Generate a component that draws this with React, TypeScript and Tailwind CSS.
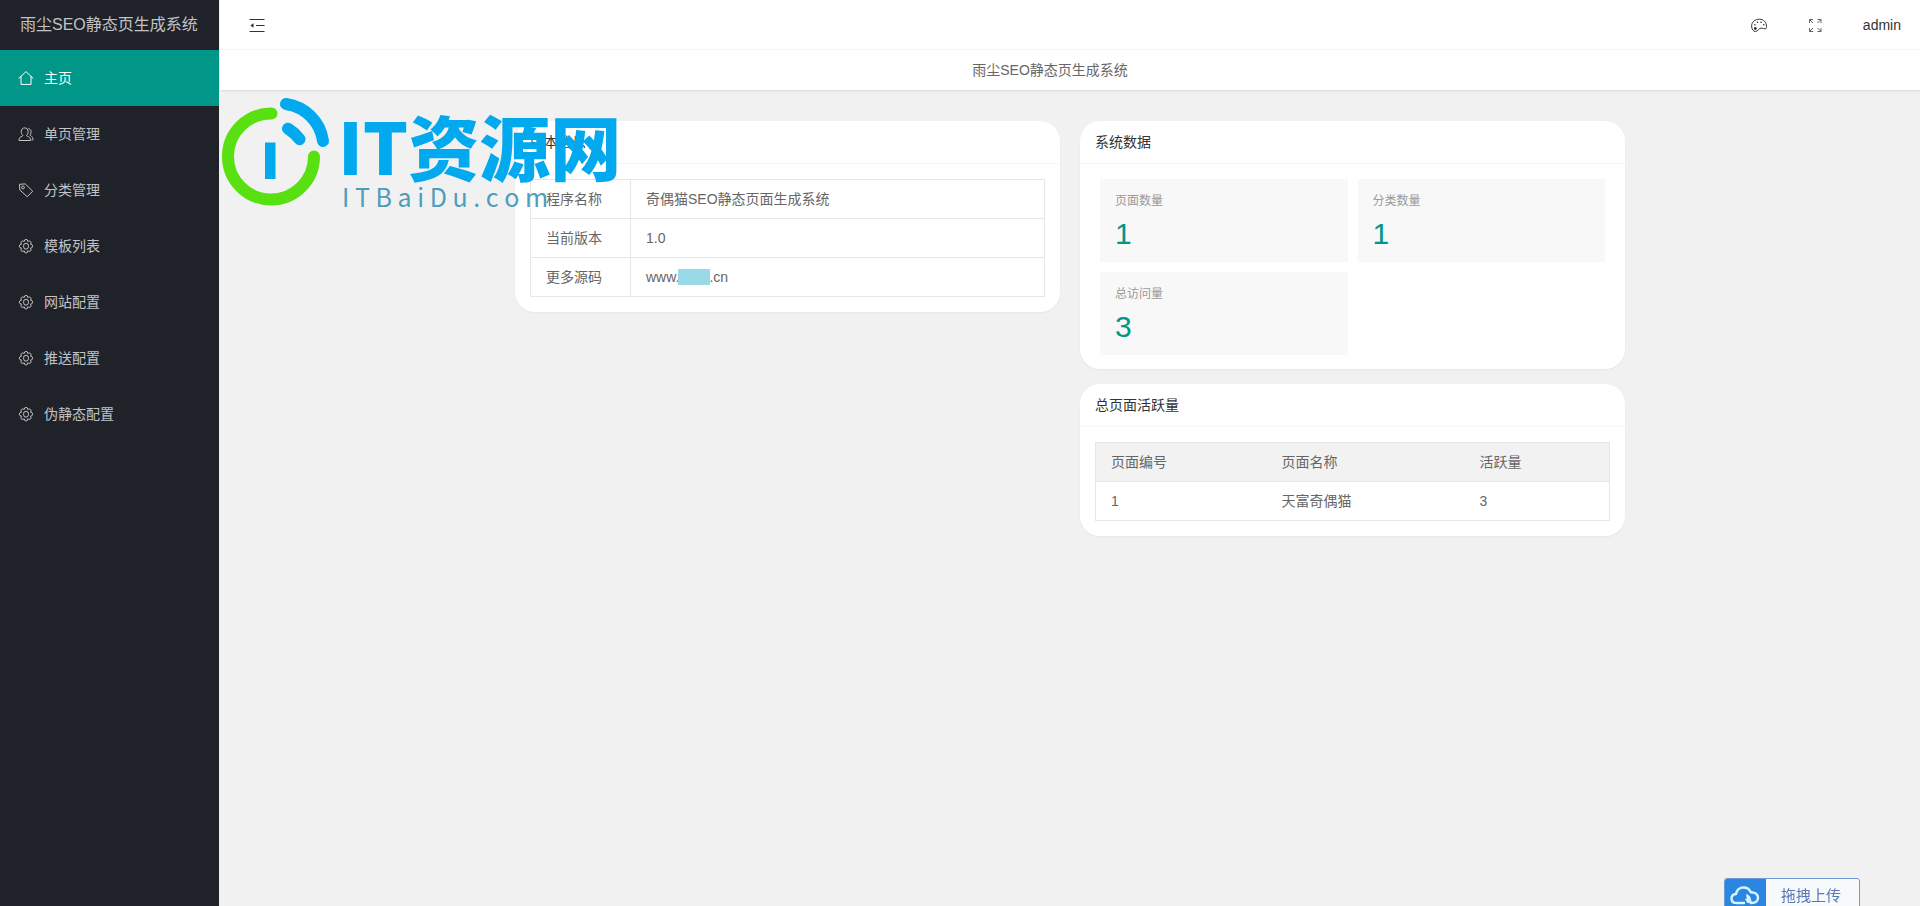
import { ReactNode } from 'react';

const menuItems = [
  { label: '主页', icon: <HomeIcon />, active: true },
  { label: '单页管理', icon: <UserIcon /> },
  { label: '分类管理', icon: <TagIcon /> },
  { label: '模板列表', icon: <GearIcon /> },
  { label: '网站配置', icon: <GearIcon /> },
  { label: '推送配置', icon: <GearIcon /> },
  { label: '伪静态配置', icon: <GearIcon /> },
];

const stats = [
  { label: '页面数量', value: 1 },
  { label: '分类数量', value: 1 },
  { label: '总访问量', value: 3 },
];

const pages = [{ id: 1, name: '天富奇偶猫', views: 3 }];

function HomeIcon() {
  return (
    <svg className="size-4" viewBox="0 0 16 16" fill="none" stroke="currentColor" strokeWidth="1">
      <path d="M1 8.2 8 1.600l7 6.600M3 6.600v7.800h10V6.600" strokeLinejoin="round" strokeLinecap="round" />
    </svg>
  );
}

function UserIcon() {
  return (
    <svg className="size-4" viewBox="0 0 16 16" fill="none" stroke="currentColor" strokeWidth="1" strokeLinejoin="round">
      <path d="M4.900 9.300C3.600 8.200 3.200 6.900 3.300 5.400 3.400 3.300 4.700 1.900 6.700 1.900s3.300 1.400 3.400 3.500c.1 1.500-.3 2.800-1.600 3.900.2.800 1 1.100 2 1.500 1.400.6 2 1.600 2 3.700H1c0-2.100.6-3.100 2-3.700 1-.4 1.700-.7 1.900-1.500Z" />
      <path d="M10.300 2.700c1.700 0 2.800 1.300 2.800 3.100 0 1.300-.4 2.300-1.200 3.200.2.800 3 .8 3.100 4.900h-1.500" />
    </svg>
  );
}

function TagIcon() {
  return (
    <svg className="size-4" viewBox="0 0 16 16" fill="none" stroke="currentColor" strokeWidth="1" strokeLinejoin="round">
      <path d="M1.500 2.300 7.200 1.900 14.700 9.200 9.200 14.700 1.800 8Z" />
      <circle cx="5" cy="5.500" r="1.400" />
    </svg>
  );
}

function GearIcon() {
  return (
    <svg className="size-4" viewBox="0 0 16 16" fill="none" stroke="currentColor" strokeWidth="1" strokeLinejoin="round">
      <path d="M6.200 3.400Q6.300 1.400 8 1.400T9.800 3.400Q11.500 2.300 12.600 3.500T12.500 6.100Q14.700 6.400 14.700 8.200T12.500 10.100Q13.700 11.900 12.500 13T9.800 12.800Q9.700 15 8 15T6.200 12.800Q4.500 14.100 3.400 13T3.500 10.100Q1.300 10 1.300 8.200T3.500 6.100Q2.300 4.600 3.400 3.500T6.200 3.400Z" />
      <ellipse cx="8" cy="8.200" rx="2.500" ry="3" />
    </svg>
  );
}

function FoldIcon() {
  return (
    <svg className="size-4" viewBox="0 0 16 16" fill="none" stroke="currentColor" strokeWidth="1.200">
      <path d="M.500 2.500h15M7 8.500h8.500M.500 14.500h15" />
      <path d="M4.500 6.200v4.600L1.300 8.500Z" fill="currentColor" stroke="none" />
    </svg>
  );
}

function PaletteIcon() {
  return (
    <svg className="size-4" viewBox="0 0 16 16" fill="none" stroke="currentColor" strokeWidth="1">
      <path d="M8.300 2.200C3.900 2.200.6 5.200.6 9.100c0 3.100 1.700 5.400 3.900 5.400 2.700 0 2.700-3.500 6-3.400 1.500 0 2.300.9 4 .8.700-.100 1-1.100 1-2.400 0-4.200-3-7.300-7.200-7.300Z" />
      <g fill="currentColor" stroke="none">
        <circle cx="4.300" cy="11.500" r="1.400" />
        <circle cx="3.900" cy="7.800" r=".8" />
        <circle cx="6.500" cy="5.200" r=".8" />
        <circle cx="10" cy="5.200" r=".8" />
        <circle cx="12.700" cy="7.800" r=".8" />
      </g>
    </svg>
  );
}

function FullscreenIcon() {
  return (
    <svg className="size-4" viewBox="0 0 16 16" fill="none" stroke="currentColor" strokeWidth="1">
      <path d="M2.500 6V2.500H6M2.500 2.500l3.500 3.500M10.500 2.500H14V6M14 2.500 10.500 6M2.500 11v3.500H6M2.500 14.500 6 11M10.500 14.500H14V11M14 14.500 10.500 11" />
    </svg>
  );
}

function CloudIcon() {
  return (
    <svg className="h-6 w-8" viewBox="0 0 32 24" fill="none" stroke="currentColor" strokeWidth="2.500" strokeLinecap="round" strokeLinejoin="round">
      <path d="M15 19H8c-3.500 0-5.500-2-5.500-4.600s2-4.200 4.600-4.500C7.700 6 10.700 3.500 14.500 3.500c3.500 0 6.200 2 7.300 4.800 4.300 0 7.200 2.300 7.200 5.500 0 3-2.500 5.200-6 5.200h-1" />
      <path d="M18 10.500c2.500 1 3.500 3 3.500 5.500l1.500 3-4.500-.5-2-3.500 1.500.5Z" fill="currentColor" strokeWidth="1" />
    </svg>
  );
}

function Watermark() {
  return (
    <div className="pointer-events-none absolute top-24 left-[222px] z-10 flex select-none">
      <svg className="h-28 w-[108px]" viewBox="0 0 108 112" fill="none" strokeWidth="12" strokeLinecap="round">
        <path d="M49.500 17.500a43 43 0 1 0 42.500 43" stroke="#58e010" />
        <path d="M64 8a43.400 43.400 0 0 1 37 37" stroke="#03a9ee" />
        <path d="M66 32.700q6.500 4 11.500 10.500" stroke="#03a9ee" />
        <path d="M43 46.500h10.500V83H43Z" fill="#03a9ee" stroke="none" />
      </svg>
      <div className="ml-2 pt-2">
        <div className="font-['Noto_Sans_CJK_SC',sans-serif] text-[71px] leading-[80px] font-black whitespace-nowrap text-[#03a9ee]">
          IT资源网
        </div>
        <div className="pl-1 font-['Noto_Sans_CJK_SC',sans-serif] text-[25px] leading-6 whitespace-nowrap text-[#4d9dbd]">
          I T B a i D u . c o m
        </div>
      </div>
    </div>
  );
}

function Card({ title, children }: { title: string; children: ReactNode }) {
  return (
    <section className="rounded-[20px] bg-white shadow-[0_1px_2px_0_rgba(0,0,0,0.05)]">
      <h2 className="border-b border-[#f6f6f6] px-[15px] leading-[42px] text-[#333]">{title}</h2>
      {children}
    </section>
  );
}

export default function App() {
  return (
    <div className="relative flex min-h-screen overflow-hidden bg-[#f1f1f1] font-['Liberation_Sans','Noto_Sans_CJK_SC',sans-serif] text-sm text-[#666]">
      <aside className="w-[219px] shrink-0 bg-[#20222a] text-[#c2c3c5]">
        <h1 className="px-5 text-base leading-[50px] whitespace-nowrap">雨尘SEO静态页生成系统</h1>
        <nav>
          {menuItems.map((item) => (
            <a
              key={item.label}
              href="#"
              className={`flex h-14 items-center gap-[10px] pl-[18px] ${item.active ? 'bg-[#009688] text-white' : ''}`}
            >
              {item.icon}
              {item.label}
            </a>
          ))}
        </nav>
      </aside>

      <div className="min-w-0 flex-1 border-l border-[#eceff4]">
        <header className="flex h-[50px] items-center justify-between border-b border-[#f6f6f6] bg-white pr-[19px] pl-[29px] text-[#333]">
          <button type="button" aria-label="折叠菜单">
            <FoldIcon />
          </button>
          <div className="flex items-center gap-10">
            <button type="button" aria-label="主题">
              <PaletteIcon />
            </button>
            <button type="button" aria-label="全屏" className="text-[#666]">
              <FullscreenIcon />
            </button>
            <a href="#">admin</a>
          </div>
        </header>
        <div className="bg-white pr-10 text-center leading-10 shadow-[0_1px_2px_0_rgba(0,0,0,0.1)]">
          雨尘SEO静态页生成系统
        </div>

        <main className="mx-auto grid max-w-[1110px] grid-cols-2 items-start gap-5 pt-[31px]">
          <Card title="版本信息">
            <div className="p-[15px]">
              <table className="w-full border-collapse text-left">
                <tbody>
                  <tr>
                    <th className="w-[100px] border border-[#e6e6e6] px-[15px] py-[9px] font-normal">程序名称</th>
                    <td className="border border-[#e6e6e6] px-[15px] py-[9px]">奇偶猫SEO静态页面生成系统</td>
                  </tr>
                  <tr>
                    <th className="border border-[#e6e6e6] px-[15px] py-[9px] font-normal">当前版本</th>
                    <td className="border border-[#e6e6e6] px-[15px] py-[9px]">1.0</td>
                  </tr>
                  <tr>
                    <th className="border border-[#e6e6e6] px-[15px] py-[9px] font-normal">更多源码</th>
                    <td className="border border-[#e6e6e6] px-[15px] py-[9px]">
                      <div className="flex items-center">
                        www.
                        <span className="-mx-px h-4 w-8 bg-[#9ad9e8]" />
                        .cn
                      </div>
                    </td>
                  </tr>
                </tbody>
              </table>
            </div>
          </Card>

          <div className="flex flex-col gap-[15px]">
            <Card title="系统数据">
              <ul className="grid grid-cols-2 gap-[10px] px-5 pt-[15px] pb-[14px]">
                {stats.map((stat) => (
                  <li key={stat.label} className="bg-[#f8f8f8] px-[15px] pt-[14px] pb-[10px]">
                    <h3 className="text-xs text-[#999]">{stat.label}</h3>
                    <p className="mt-[7px] text-3xl text-[#009688]">{stat.value}</p>
                  </li>
                ))}
              </ul>
            </Card>

            <Card title="总页面活跃量">
              <div className="p-[15px]">
                <table className="w-full border-collapse border border-[#e6e6e6] text-left">
                  <thead className="bg-[#f2f2f2]">
                    <tr className="border-b border-[#e6e6e6]">
                      <th className="w-[171px] px-[15px] py-[9px] font-normal">页面编号</th>
                      <th className="w-[198px] px-[15px] py-[9px] font-normal">页面名称</th>
                      <th className="px-[15px] py-[9px] font-normal">活跃量</th>
                    </tr>
                  </thead>
                  <tbody>
                    {pages.map((page) => (
                      <tr key={page.id}>
                        <td className="px-[15px] py-[9px]">{page.id}</td>
                        <td className="px-[15px] py-[9px]">{page.name}</td>
                        <td className="px-[15px] py-[9px]">{page.views}</td>
                      </tr>
                    ))}
                  </tbody>
                </table>
              </div>
            </Card>
          </div>
        </main>
      </div>

      <Watermark />

      <button
        type="button"
        className="fixed right-[60px] -bottom-2 flex h-9 items-stretch overflow-hidden rounded-[3px] border border-[#6f9bd2] bg-[#f7fafd] text-[15px] text-[#5877b5]"
      >
        <span className="flex w-[41px] items-center justify-center bg-[#2b86e3] text-[#d5f5ff]">
          <CloudIcon />
        </span>
        <span className="flex items-center pr-[18px] pl-[15px]">拖拽上传</span>
      </button>
    </div>
  );
}
